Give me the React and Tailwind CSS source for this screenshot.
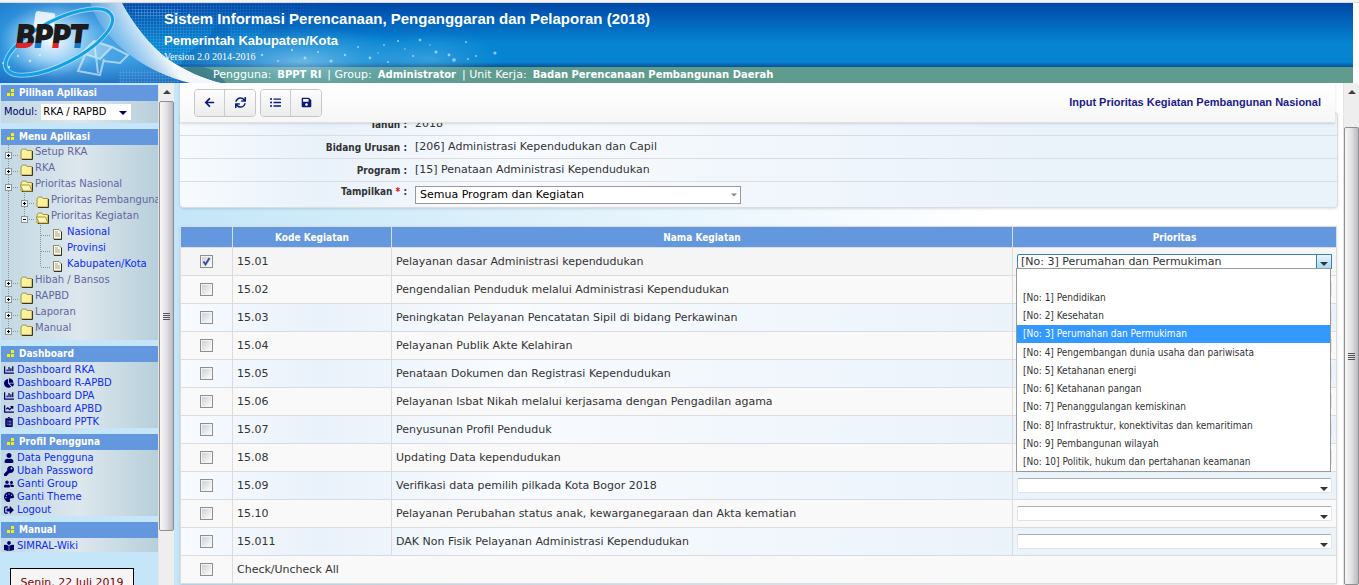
import React, { useState } from 'react';
import {
  FaArrowLeft,
  FaSync,
  FaListUl,
  FaSave,
  FaChartBar,
  FaChartPie,
  FaChartLine,
  FaClipboardList,
  FaUser,
  FaKey,
  FaUserFriends,
  FaPalette,
  FaSignOutAlt,
  FaBookReader,
} from 'react-icons/fa';

const verdana = "font-['DejaVu_Sans',sans-serif]";
const tahoma = "font-['DejaVu_Sans_Condensed','DejaVu_Sans',sans-serif]";
const softBlue = 'bg-[linear-gradient(90deg,#f7fbff,#e9f1fa_12%,#f8fbff_28%,#eaf2fa_75%)]';

const menu = [
  { label: 'Setup RKA', level: 0 },
  { label: 'RKA', level: 0 },
  { label: 'Prioritas Nasional', level: 0, open: true },
  { label: 'Prioritas Pembangunan', level: 1 },
  { label: 'Prioritas Kegiatan', level: 1, open: true, last: true },
  { label: 'Nasional', level: 2 },
  { label: 'Provinsi', level: 2 },
  { label: 'Kabupaten/Kota', level: 2, last: true },
  { label: 'Hibah / Bansos', level: 0 },
  { label: 'RAPBD', level: 0 },
  { label: 'Laporan', level: 0 },
  { label: 'Manual', level: 0, last: true },
];

const dashboardLinks = [
  { label: 'Dashboard RKA', icon: FaChartBar },
  { label: 'Dashboard R-APBD', icon: FaChartPie },
  { label: 'Dashboard DPA', icon: FaChartBar },
  { label: 'Dashboard APBD', icon: FaChartLine },
  { label: 'Dashboard PPTK', icon: FaClipboardList },
];

const profileLinks = [
  { label: 'Data Pengguna', icon: FaUser },
  { label: 'Ubah Password', icon: FaKey },
  { label: 'Ganti Group', icon: FaUserFriends },
  { label: 'Ganti Theme', icon: FaPalette },
  { label: 'Logout', icon: FaSignOutAlt },
];

const manualLinks = [{ label: 'SIMRAL-Wiki', icon: FaBookReader }];

const kegiatan = [
  { kode: '15.01', nama: 'Pelayanan dasar Administrasi kependudukan' },
  { kode: '15.02', nama: 'Pengendalian Penduduk melalui Administrasi Kependudukan' },
  { kode: '15.03', nama: 'Peningkatan Pelayanan Pencatatan Sipil di bidang Perkawinan' },
  { kode: '15.04', nama: 'Pelayanan Publik Akte Kelahiran' },
  { kode: '15.05', nama: 'Penataan Dokumen dan Registrasi Kependudukan' },
  { kode: '15.06', nama: 'Pelayanan Isbat Nikah melalui kerjasama dengan Pengadilan agama' },
  { kode: '15.07', nama: 'Penyusunan Profil Penduduk' },
  { kode: '15.08', nama: 'Updating Data kependudukan' },
  { kode: '15.09', nama: 'Verifikasi data pemilih pilkada Kota Bogor 2018' },
  { kode: '15.10', nama: 'Pelayanan Perubahan status anak, kewarganegaraan dan Akta kematian' },
  { kode: '15.011', nama: 'DAK Non Fisik Pelayanan Administrasi Kependudukan' },
];

const prioritas = [
  '',
  '[No: 1] Pendidikan',
  '[No: 2] Kesehatan',
  '[No: 3] Perumahan dan Permukiman',
  '[No: 4] Pengembangan dunia usaha dan pariwisata',
  '[No: 5] Ketahanan energi',
  '[No: 6] Ketahanan pangan',
  '[No: 7] Penanggulangan kemiskinan',
  '[No: 8] Infrastruktur, konektivitas dan kemaritiman',
  '[No: 9] Pembangunan wilayah',
  '[No: 10] Politik, hukum dan pertahanan keamanan',
];

const HeaderArt = () => (
  <svg className="absolute left-0 top-0" width="540" height="80" viewBox="0 0 540 80" aria-hidden="true">
    <defs>
      <linearGradient id="sky" x1="0" y1="0" x2="1" y2="0">
        <stop offset="0" stopColor="#2c93dc" />
        <stop offset="0.25" stopColor="#5fb4ec" />
        <stop offset="0.6" stopColor="#3d9de2" />
        <stop offset="1" stopColor="#1a74c8" />
      </linearGradient>
      <linearGradient id="depth" x1="0" y1="0" x2="0" y2="1">
        <stop offset="0" stopColor="#1067c0" stopOpacity="0.45" />
        <stop offset="0.35" stopColor="#1067c0" stopOpacity="0" />
        <stop offset="0.7" stopColor="#1067c0" stopOpacity="0" />
        <stop offset="1" stopColor="#0d5ab2" stopOpacity="0.65" />
      </linearGradient>
      <radialGradient id="burst">
        <stop offset="0" stopColor="#ffffff" stopOpacity="0.95" />
        <stop offset="0.5" stopColor="#d8effc" stopOpacity="0.6" />
        <stop offset="1" stopColor="#9fd6f7" stopOpacity="0" />
      </radialGradient>
      <linearGradient id="edge" gradientUnits="userSpaceOnUse" x1="108" y1="50" x2="150" y2="24">
        <stop offset="0" stopColor="#ffffff" stopOpacity="0" />
        <stop offset="1" stopColor="#ffffff" stopOpacity="0.95" />
      </linearGradient>
      <linearGradient id="inkRed" gradientUnits="userSpaceOnUse" x1="0" y1="22" x2="0" y2="45">
        <stop offset="0.76" stopColor="#1c1a1c" />
        <stop offset="0.8" stopColor="#e0242a" />
      </linearGradient>
      <linearGradient id="inkBlue" gradientUnits="userSpaceOnUse" x1="0" y1="22" x2="0" y2="45">
        <stop offset="0.76" stopColor="#1c1a1c" />
        <stop offset="0.8" stopColor="#1678c8" />
      </linearGradient>
      <linearGradient id="fade" x1="0" y1="0" x2="1" y2="0">
        <stop offset="0.3" stopColor="#fff" />
        <stop offset="0.65" stopColor="#000" />
      </linearGradient>
      <mask id="fadeMask">
        <rect width="540" height="80" fill="url(#fade)" />
      </mask>
      <radialGradient id="glow">
        <stop offset="0" stopColor="#a8dcf5" stopOpacity="0.6" />
        <stop offset="1" stopColor="#5cb8ea" stopOpacity="0" />
      </radialGradient>
      <pattern id="mesh" width="3" height="3" patternUnits="userSpaceOnUse">
        <path d="M0 0H3M0 0V3" stroke="#9fd0f2" strokeWidth="1" opacity="0.35" />
      </pattern>
      <clipPath id="photo">
        <path d="M0 0H122C134 22 150 42 168 56C184 67 204 76 222 80H0Z" />
      </clipPath>
    </defs>

    <g mask="url(#fadeMask)">
      <rect x="120" width="230" height="64" fill="url(#mesh)" />
      <path d="M132 6H180V14H136Z" fill="url(#mesh)" />
      <path d="M180 64C190 40 206 44 212 28C220 16 232 22 230 36C240 46 258 34 268 24C280 12 296 22 288 38L300 64Z" fill="#0a56ad" opacity="0.5" />
      <path d="M300 10C330 18 322 40 342 64H270C290 50 280 26 300 10Z" fill="#0c5fb6" opacity="0.4" />
    </g>
    <path d="M180 66C196 62 212 60 226 80H190Z" fill="#1f5f73" opacity="0.55" />
    <ellipse cx="300" cy="58" rx="130" ry="34" fill="url(#glow)" />
    <ellipse cx="430" cy="56" rx="70" ry="28" fill="url(#glow)" opacity="0.5" />
    <g fill="#c4e8f9" opacity="0.7">
      <circle cx="262" cy="52" r="1.3" /><circle cx="278" cy="58" r="1" /><circle cx="292" cy="47" r="1.2" />
      <circle cx="305" cy="55" r="1.5" /><circle cx="318" cy="49" r="1.1" /><circle cx="331" cy="58" r="1.6" />
      <circle cx="345" cy="52" r="1.2" /><circle cx="358" cy="44" r="1" /><circle cx="370" cy="55" r="1.4" />
      <circle cx="384" cy="42" r="0.9" /><circle cx="398" cy="38" r="1.1" /><circle cx="413" cy="53" r="1.1" />
      <circle cx="420" cy="37" r="1.3" /><circle cx="436" cy="49" r="1.6" /><circle cx="449" cy="52" r="1.4" />
      <circle cx="454" cy="57" r="1.8" /><circle cx="468" cy="56" r="1" /><circle cx="476" cy="53" r="1" />
      <circle cx="495" cy="50" r="1.6" /><circle cx="466" cy="39" r="1" /><circle cx="378" cy="50" r="0.8" />
      <circle cx="388" cy="59" r="1" /><circle cx="405" cy="46" r="0.8" /><circle cx="430" cy="42" r="0.8" />
    </g>

    <g clipPath="url(#photo)">
      <rect width="225" height="80" fill="url(#sky)" />
      <rect width="225" height="80" fill="url(#depth)" />
      <ellipse cx="52" cy="38" rx="52" ry="36" fill="url(#burst)" />
      <rect x="34" y="9" width="20" height="24" rx="3" fill="#fff" opacity="0.8" transform="rotate(8 44 21)" />
      <path d="M82 50L94 38L112 44L100 56ZM86 50L78 68L100 72L104 56M94 38L98 70M112 44L128 52L120 60L104 58" fill="none" stroke="#e6f5fd" strokeWidth="2" opacity="0.6" />
      <path d="M82 50L94 38L112 44L100 56Z" fill="#e6f5fd" opacity="0.35" />
      <rect x="119" y="67" width="60" height="13" fill="url(#mesh)" />
      <path d="M90 0H122C134 22 150 42 168 56C184 67 204 76 222 80H190C150 70 106 44 90 0Z" fill="url(#edge)" />
      <g fill="#e8f6fd" opacity="0.8">
        <circle cx="3" cy="60" r="1" /><circle cx="9" cy="64" r="1.2" /><circle cx="18" cy="53" r="1" />
        <circle cx="30" cy="58" r="1.2" /><circle cx="40" cy="52" r="1" />
      </g>
    </g>

    <g fill="none" transform="rotate(-27 59 39)">
      <ellipse cx="59" cy="39" rx="59" ry="22" stroke="#c8e8fb" strokeWidth="5" opacity="0.7" />
      <ellipse cx="59" cy="39" rx="59" ry="22" stroke="#10a0e6" strokeWidth="3" />
    </g>
    <text
      x="16"
      y="44"
      fontFamily="Lato, sans-serif"
      fontSize="30"
      fontWeight="900"
      fontStyle="italic"
      strokeWidth="1.8"
    >
      <tspan fill="url(#inkRed)" stroke="url(#inkRed)">B</tspan>
      <tspan fill="url(#inkBlue)" stroke="url(#inkBlue)">P</tspan>
      <tspan fill="url(#inkRed)" stroke="url(#inkRed)">P</tspan>
      <tspan fill="url(#inkBlue)" stroke="url(#inkBlue)">T</tspan>
    </text>
  </svg>
);

const Header = () => (
  <header className="relative mr-1.5 flex h-20 shrink-0 flex-col bg-[linear-gradient(#0047a8,#0684d2_50%,#0684d2_74%,#0a4f8e_80%,#5f9c8e_80%)] text-white">
    <HeaderArt />
    <div className="relative flex flex-1 flex-col pl-[164px] font-['Liberation_Sans',sans-serif] font-bold">
      <h1 className="pt-1.5 text-[15px] leading-5">
        Sistem Informasi Perencanaan, Penganggaran dan Pelaporan (2018)
      </h1>
      <h2 className="pt-0.5 text-[13px] leading-5">Pemerintah Kabupaten/Kota</h2>
      <p className="font-['Liberation_Serif',serif] text-[10px] leading-3 font-normal">Version 2.0 2014-2016</p>
    </div>
    <div className={`relative flex h-4 items-baseline gap-1.5 pl-[213px] text-[11px] leading-4 whitespace-nowrap ${verdana}`}>
      <span>Pengguna:</span>
      <b className="text-[10px]">BPPT RI</b>
      <span>| Group:</span>
      <b className="text-[10px]">Administrator</b>
      <span>| Unit Kerja:</span>
      <b className="text-[10px]">Badan Perencanaan Pembangunan Daerah</b>
    </div>
  </header>
);

const Arrow = ({ className }) => (
  <svg className={className} width="8" height="4" viewBox="0 0 8 4" aria-hidden="true">
    <path d="M0 0H8L4 4Z" fill="currentColor" />
  </svg>
);

const ScrollBar = ({ thumb }) => (
  <div className="flex w-4 shrink-0 flex-col border-l border-[#e4e4e4] bg-[#eeeeee]" aria-hidden="true">
    <div className="flex h-[18px] shrink-0 items-center justify-center">
      <Arrow className="rotate-180 text-[#404040]" />
    </div>
    <div className={`flex items-center justify-center rounded-xs border border-[#8f8f92] bg-linear-to-r from-[#f8f8f8] via-[#e2e2e4] to-[#b9b9c0] ${thumb}`}>
      <div className="flex w-[7px] flex-col gap-px">
        <i className="h-px bg-[#555]" />
        <i className="h-px bg-[#555]" />
        <i className="h-px bg-[#555]" />
        <i className="h-px bg-[#555]" />
      </div>
    </div>
  </div>
);

const Panel = ({ title, children }) => (
  <section>
    <h3 className={`flex h-4 items-center gap-1 bg-[#6397de] pb-px pl-1.5 text-[10px] font-bold text-white ${tahoma}`}>
      <svg width="8" height="8" viewBox="0 0 8 8" aria-hidden="true">
        <path d="M4 0H7V3H4ZM0 4H3V7H0ZM4 4H7V7H4Z" fill="#ffee00" />
      </svg>
      {title}
    </h3>
    <div className="bg-linear-to-r from-[#c2d8e3] via-[#dde7ed] to-[#b7cfdb]">{children}</div>
  </section>
);

const LinkList = ({ links }) => (
  <ul className="pt-px">
    {links.map(({ label, icon: Icon }) => (
      <li key={label} className="flex h-[13px] items-center gap-[3px] pl-[3px]">
        <Icon className="h-2.5 w-auto shrink-0 text-[#00006e]" />
        <a href="#" className="text-[10px] leading-3 text-[#0a2cf5]">{label}</a>
      </li>
    ))}
  </ul>
);

const Folder = ({ open }) => (
  <svg className="mt-[3px] shrink-0" width="14" height="12" viewBox="0 0 14 12" aria-hidden="true">
    <path d="M1 3L2.5 1H6L7 2.5H12V11H1Z" fill="#fbf0a0" stroke="#a8963c" />
    <path d="M12.5 3V11.5H2" fill="none" stroke="#3c3620" />
    {open && <path d="M0.5 5H9.5L12 11H3Z" fill="#fff6b4" stroke="#a8963c" />}
  </svg>
);

const Doc = () => (
  <svg className="mt-[3px] shrink-0" width="10" height="12" viewBox="0 0 10 12" aria-hidden="true">
    <path d="M0.5 1.5H6L8.5 4V11H0.5Z" fill="#fdfbe4" stroke="#8c8a78" />
    <path d="M8.5 3.5V11.5H1" fill="none" stroke="#33322a" />
    <path d="M2 4H5M2 6H7M2 8H7" stroke="#a5a28c" />
  </svg>
);

const Expander = ({ open, level, last }) => (
  <svg className="shrink-0" width="16" height="16" viewBox="0 0 16 16" aria-hidden="true">
    <path d={last ? 'M5.5 0V10' : 'M5.5 0V16'} stroke="#8b97a0" strokeDasharray="1 1" />
    <path d="M6 10.5H16" stroke="#8b97a0" strokeDasharray="1 1" />
    {level < 2 && (
      <g>
        <rect x="2.5" y="7.5" width="6" height="6" fill="#eef3f6" stroke="#8b97a0" />
        <path d="M4 10.5H7" stroke="#000" />
        {!open && <path d="M5.5 9V12" stroke="#000" />}
      </g>
    )}
  </svg>
);

const Guide = ({ dashed }) => (
  <svg className="shrink-0" width="16" height="16" viewBox="0 0 16 16" aria-hidden="true">
    {dashed && <path d="M5.5 0V16" stroke="#8b97a0" strokeDasharray="1 1" />}
  </svg>
);

const MenuTree = () => (
  <ul className="overflow-hidden pb-[3px] pl-0.5">
    {menu.map((item) => (
      <li key={item.label} className="flex h-4 whitespace-nowrap">
        {item.level > 0 && <Guide dashed />}
        {item.level > 1 && <Guide />}
        <Expander open={item.open} level={item.level} last={item.last} />
        <a
          href="#"
          className={`flex text-[10px] leading-[14px] ${item.level === 2 ? 'gap-1 pl-0.5 text-[#0a2cf5]' : 'gap-px pl-px text-[#6464a0]'}`}
        >
          {item.level === 2 ? <Doc /> : <Folder open={item.open} />}
          {item.label}
        </a>
      </li>
    ))}
  </ul>
);

const Sidebar = () => (
  <aside className={`flex w-[158px] shrink-0 flex-col gap-1.5 overflow-hidden bg-[#c4e6f8] pt-0.5 pl-px ${verdana}`}>
    <Panel title="Pilihan Aplikasi">
      <div className="flex h-[22px] items-center gap-1 pl-[3px] text-[11px] text-[#00006e]">
        <label htmlFor="modul" className={tahoma}>Modul:</label>
        <div className="relative">
          <select
            id="modul"
            className={`block h-4 w-[90px] appearance-none bg-white pl-0.5 text-[11px] leading-4 text-black ${tahoma}`}
          >
            <option>RKA / RAPBD</option>
          </select>
          <Arrow className="pointer-events-none absolute top-[7px] right-1" />
        </div>
      </div>
    </Panel>
    <Panel title="Menu Aplikasi">
      <MenuTree />
    </Panel>
    <Panel title="Dashboard">
      <LinkList links={dashboardLinks} />
    </Panel>
    <Panel title="Profil Pengguna">
      <LinkList links={profileLinks} />
    </Panel>
    <Panel title="Manual">
      <LinkList links={manualLinks} />
    </Panel>
    <div className="mt-2.5 mr-6 ml-[9px] h-10 shrink-0 border border-black bg-[#f5f5f5] pt-1.5 text-center text-[11px] text-[#800000]">
      Senin, 22 Juli 2019
    </div>
  </aside>
);

const ToolButton = ({ label, icon: Icon }) => (
  <button
    type="button"
    aria-label={label}
    className="flex h-[26px] w-[30px] items-center justify-center bg-linear-to-b from-[#fdfdfd] to-[#ececec] text-[#0c1a78]"
  >
    <Icon className="size-[11px]" />
  </button>
);

const Toolbar = () => (
  <div className="absolute top-0 right-2 left-0 z-10 flex h-10 items-center border-b border-[#e2e2e2] bg-linear-to-b from-white to-[#f7f7f7] px-3.5 shadow-sm">
    <div className="flex divide-x divide-[#ccc] overflow-hidden rounded border border-[#c6c6c6]">
      <ToolButton label="Kembali" icon={FaArrowLeft} />
      <ToolButton label="Muat ulang" icon={FaSync} />
    </div>
    <div className="ml-1 flex divide-x divide-[#ccc] overflow-hidden rounded border border-[#c6c6c6]">
      <ToolButton label="Daftar" icon={FaListUl} />
      <ToolButton label="Simpan" icon={FaSave} />
    </div>
    <h2 className="ml-auto font-['Liberation_Sans',sans-serif] text-[11px] font-bold text-[#1b1b8c]">
      Input Prioritas Kegiatan Pembangunan Nasional
    </h2>
  </div>
);

const Field = ({ label, children }) => (
  <div className="flex h-[23px] items-center border-b border-[#dcdcdc]">
    <span className={`w-[227px] text-right text-[10px] font-bold text-[#333] ${tahoma}`}>{label} :</span>
    <span className="pl-2">{children}</span>
  </div>
);

const FilterForm = () => (
  <form className={`rounded-sm border border-l-0 border-[#dcdcdc] text-[11px] shadow ${softBlue}`}>
    <Field label="Tahun">2018</Field>
    <Field label="Bidang Urusan">[206] Administrasi Kependudukan dan Capil</Field>
    <Field label="Program">[15] Penataan Administrasi Kependudukan</Field>
    <div className="flex h-[25px] items-center">
      <label htmlFor="tampilkan" className={`w-[227px] pb-1.5 text-right text-[10px] font-bold text-[#333] ${tahoma}`}>
        Tampilkan <span className="text-red-600">*</span> :
      </label>
      <div className="relative ml-2">
        <select
          id="tampilkan"
          className="block h-[18px] w-[326px] appearance-none border border-[#999] bg-white pl-1 text-[11px] leading-4 text-black"
        >
          <option>Semua Program dan Kegiatan</option>
        </select>
        <Arrow className="pointer-events-none absolute top-[7px] right-1 w-1.5 text-[#888]" />
      </div>
    </div>
  </form>
);

const Checkbox = ({ label, defaultChecked }) => (
  <div className="relative mx-auto size-[13px]">
    <input
      type="checkbox"
      aria-label={label}
      defaultChecked={defaultChecked}
      className="peer block size-[13px] appearance-none border border-[#8e8f8f] bg-linear-to-br from-[#c9cdd2] to-white shadow-[inset_0_0_0_1px_#f4f4f4]"
    />
    <svg
      className="pointer-events-none absolute inset-0 hidden peer-checked:block"
      width="13"
      height="13"
      viewBox="0 0 13 13"
      aria-hidden="true"
    >
      <path d="M3.5 6.5L5.5 9.5L9.5 3" fill="none" stroke="#3a4fa0" strokeWidth="2" />
    </svg>
  </div>
);

const PrioritasSelect = ({ kode, open }) => {
  const [value, setValue] = useState(open ? prioritas[3] : '');

  return (
    <div className="relative">
      <select
        aria-label={`Prioritas ${kode}`}
        value={value}
        onChange={(e) => setValue(e.target.value)}
        className={`block h-[15px] w-full appearance-none rounded-xs border bg-white pl-[3px] text-[11px] leading-[13px] text-[#333] ${open ? 'border-[#3c7fb1]' : 'border-[#dfe3ea] border-t-[#abadb3]'}`}
      >
        {prioritas.map((p) => (
          <option key={p}>{p}</option>
        ))}
      </select>
      {open ? (
        <span className="pointer-events-none absolute top-0 right-0 flex h-[15px] w-4 items-end justify-center border border-[#3c7fb1] bg-linear-to-b from-[#e9f6fd] to-[#a7d9f5] pb-0.5">
          <Arrow />
        </span>
      ) : (
        <Arrow className="pointer-events-none absolute right-1 bottom-0.5" />
      )}
      {open && (
        <ul
          role="listbox"
          aria-label="Prioritas"
          className={`absolute top-[14px] right-px -left-px z-20 flex h-[204px] flex-col border border-[#999] bg-white pt-px text-[10px] text-[#333] ${tahoma}`}
        >
          {prioritas.map((p) => (
            <li
              key={p}
              role="option"
              aria-selected={p === value}
              className={`flex flex-1 items-center pl-1.5 whitespace-nowrap ${p === value ? 'bg-[#3399ff] text-white' : ''}`}
            >
              {p}
            </li>
          ))}
        </ul>
      )}
    </div>
  );
};

const rowColor = (i) => {
  if (i === 0) return 'bg-[#f5f5f5]';
  return i % 2 === 0 ? softBlue : 'bg-[#f9f9f9]';
};

const KegiatanTable = () => (
  <table className="w-full table-fixed border-collapse border border-[#dcdcdc] text-[11px] shadow">
    <colgroup>
      <col className="w-[52px]" />
      <col className="w-[159px]" />
      <col />
      <col className="w-[324px]" />
    </colgroup>
    <thead>
      <tr className={`h-[21px] bg-[#6397de] text-[10px] text-white ${tahoma}`}>
        <th className="border border-[#dcdcdc]" />
        <th className="border border-[#dcdcdc]">Kode Kegiatan</th>
        <th className="border border-[#dcdcdc]">Nama Kegiatan</th>
        <th className="border border-[#dcdcdc]">Prioritas</th>
      </tr>
    </thead>
    <tbody>
      {kegiatan.map((row, i) => (
        <tr key={row.kode} className={`h-7 ${rowColor(i)}`}>
          <td className="border border-[#dcdcdc]">
            <Checkbox label={`Pilih ${row.kode}`} defaultChecked={i === 0} />
          </td>
          <td className="border border-[#dcdcdc] px-1 pt-0.5">{row.kode}</td>
          <td className="border border-[#dcdcdc] px-1 pt-0.5">{row.nama}</td>
          <td className="border border-[#dcdcdc] px-1">
            <PrioritasSelect kode={row.kode} open={i === 0} />
          </td>
        </tr>
      ))}
      <tr className="h-7 bg-[#f9f9f9]">
        <td className="border border-[#dcdcdc]">
          <Checkbox label="Check/Uncheck All" />
        </td>
        <td colSpan={3} className="px-1 pt-0.5">Check/Uncheck All</td>
      </tr>
    </tbody>
  </table>
);

export default function App() {
  return (
    <div className="flex h-screen flex-col overflow-hidden bg-white">
      <div className="h-[3px] shrink-0 border-b border-[#dadada] bg-[#f3f3f3]" />
      <Header />
      <div className="flex min-h-0 flex-1">
        <Sidebar />
        <ScrollBar thumb="h-[430px]" />
        <main
          className={`relative min-w-0 flex-1 overflow-hidden bg-linear-to-r from-[#c4e6f8] to-white to-70% pl-1.5 text-[#333] ${verdana}`}
        >
          <div className="relative pt-[29px]">
            <Toolbar />
            <div className="pr-[5px]">
              <FilterForm />
            </div>
            <div className="mt-[18px] pr-1.5">
              <KegiatanTable />
            </div>
          </div>
        </main>
        <ScrollBar thumb="mt-[26px] flex-1" />
      </div>
    </div>
  );
}
